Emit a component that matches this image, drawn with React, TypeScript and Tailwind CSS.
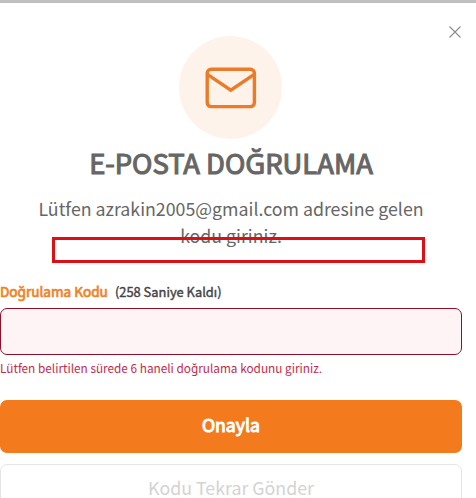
import React from "react";

function CloseIcon() {
  return (
    <svg width="12" height="12" viewBox="0 0 12 12" fill="none" stroke="#8c8c8c" strokeWidth="1.1">
      <path d="M0.5 0.5 11.5 11.5M11.5 0.5 0.5 11.5" />
    </svg>
  );
}

function MailIcon() {
  return (
    <svg width="52" height="42" viewBox="0 0 52 42" fill="none" stroke="#ec7a26" strokeWidth="3.4" strokeLinejoin="round">
      <rect x="2.2" y="2.2" width="47.2" height="37.4" rx="4" />
      <path d="M2.8 7.6 25.8 23.2 48.8 7.6" strokeLinejoin="miter" />
    </svg>
  );
}

export default function App() {
  return (
    <main className="relative h-[498px] w-[476px] overflow-hidden border-t-[3px] border-[#c0c0c0] bg-white font-['Noto_Sans_CJK_SC','Noto_Sans',sans-serif] text-[#666]">
      <button aria-label="Kapat" className="absolute top-[23px] right-[15px] block">
        <CloseIcon />
      </button>
      <div className="flex w-[462px] flex-col">
        <div className="mt-[33px] mr-px flex size-[103px] items-center justify-center self-center rounded-full bg-[#fef3eb]">
          <MailIcon />
        </div>
        <h1 className="mt-[4px] h-[38px] text-center text-[27.4px] leading-[38px] font-normal whitespace-nowrap [-webkit-text-stroke:1.1px_#666]">
          <span>E-POSTA DOĞRULAMA</span>
        </h1>
        <p className="relative mt-[14px] text-center text-[17.75px] leading-[27px] whitespace-nowrap">
          <span>Lütfen azrakin2005@gmail.com adresine gelen</span>
          <br />
          <span>kodu giriniz.</span>
          <span className="absolute top-[42px] left-[52px] h-[26px] w-[373px] border-[3px] border-[#de0f14]" />
        </p>
        <label className="mt-[32px] flex h-[22px] items-center gap-[7px] leading-[22px] whitespace-nowrap">
          <span className="relative -top-px text-[13.6px] [-webkit-text-stroke:0.7px_#f08228] text-[#f08228]">Doğrulama Kodu</span>
          <span className="text-[12.9px] [-webkit-text-stroke:0.4px_#444] text-[#444]">(258 Saniye Kaldı)</span>
        </label>
        <input className="mt-[5px] h-[47px] w-full rounded-[7px] border border-[#8d1028] bg-[#fff4f5]" />
        <div className="mt-[3px] h-[20px] text-[11.8px] leading-[20px] whitespace-nowrap text-[#c22a4c]">
          <span>Lütfen belirtilen sürede 6 haneli doğrulama kodunu giriniz.</span>
        </div>
        <button className="mt-[22px] h-[53px] rounded-[7px] bg-[#f47b1d] pb-[4px] text-[17.7px] text-white [-webkit-text-stroke:1px_#fff]">
          <span>Onayla</span>
        </button>
        <button className="mt-[11px] h-[53px] rounded-[7px] border border-[#e5e5e7] pb-[7px] text-[17.8px] leading-[20px] text-[#d3d3d3]">
          <span>Kodu Tekrar Gönder</span>
        </button>
      </div>
    </main>
  );
}
